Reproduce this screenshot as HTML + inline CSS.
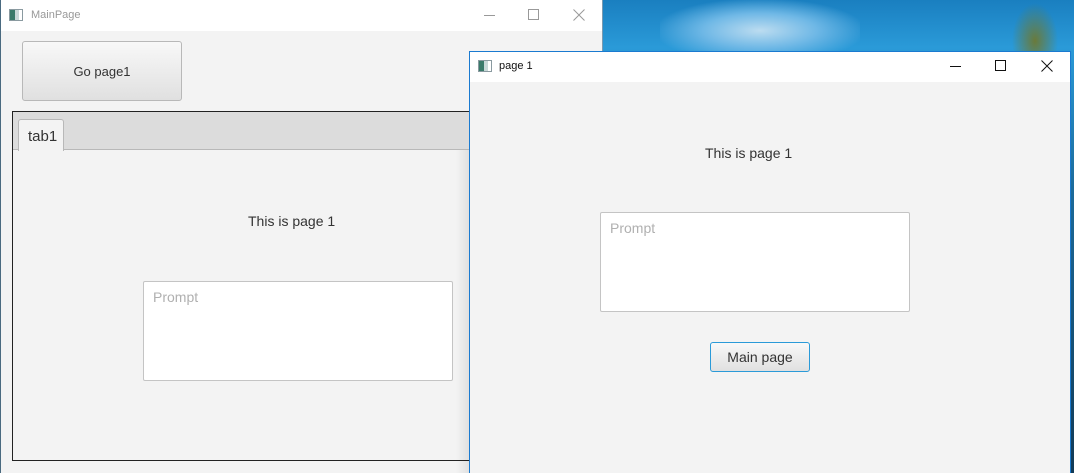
<!DOCTYPE html>
<html><head><style>
html,body{margin:0;width:1074px;height:473px;overflow:hidden}
body{position:relative;font-family:"Liberation Sans",sans-serif;background:linear-gradient(180deg,#1a7fc0 0%,#2a9ad8 10%,#1c6a9a 40%,#123a55 100%);}
.abs{position:absolute;box-sizing:border-box}
.cloud{position:absolute;left:660px;top:0;width:200px;height:51px;background:radial-gradient(ellipse at 50% 60%,#bcdcf0 0%,#6fb8e6 40%,rgba(40,150,220,0) 75%);}
.tree{position:absolute;left:1010px;top:0;width:50px;height:51px;background:radial-gradient(ellipse at 50% 80%,#6a7a3a 0%,rgba(30,120,190,0) 65%);}
.icon{position:absolute;width:14px;height:12px;border:1px solid #8a9aa0;background:linear-gradient(90deg,#3a7a6a 0 5px,#c8d8d8 5px 9px,#fff 9px);box-sizing:border-box}
.title{position:absolute;font-size:11px;}
.btn{border:1px solid #b8b8b8;border-radius:3px;background:linear-gradient(#f8f8f8,#e0e0e0);font-size:13px;color:#333;display:flex;align-items:center;justify-content:center}
.ta{background:#fff;border:1px solid #c4c4c4;border-radius:2px;color:#b0b0b0;font-size:14px;padding:7px 9px}
svg{position:absolute}
</style></head><body>
<div class="cloud"></div><div class="tree"></div>
<!-- main window -->
<div class="abs" style="left:0;top:0;width:603px;height:473px;background:#f3f3f3;border-left:1px solid #4a6a80;border-right:1px solid #7a9ab0"></div>
<div class="abs" style="left:1px;top:0;width:601px;height:31px;background:#fff"></div>
<div class="icon" style="left:9px;top:9px"></div>
<div class="title" style="left:31px;top:9px;color:#999">MainPage</div>
<div class="abs" style="left:484px;top:15px;width:11px;height:1px;background:#999"></div>
<div class="abs" style="left:528px;top:9px;width:11px;height:11px;border:1px solid #999"></div>
<svg style="left:573px;top:9px" width="12" height="12"><path d="M0.5 0.5L11.5 11.5M11.5 0.5L0.5 11.5" stroke="#999" stroke-width="1"/></svg>
<div class="abs btn" style="left:22px;top:41px;width:160px;height:60px">Go page1</div>
<div class="abs" style="left:12px;top:111px;width:470px;height:350px;border:1px solid #222;border-right:none;background:#f3f3f3"></div>
<div class="abs" style="left:13px;top:112px;width:460px;height:38px;background:#dcdcdc;border-bottom:1px solid #b8b8b8"></div>
<div class="abs" style="left:18px;top:119px;width:46px;height:32px;background:#f3f3f3;border:1px solid #b8b8b8;border-bottom:none;border-radius:3px 3px 0 0;font-size:15px;color:#333;padding:8px 0 0 9px">tab1</div>
<div class="abs" style="left:248px;top:213px;font-size:14px;color:#333">This is page 1</div>
<div class="abs ta" style="left:143px;top:281px;width:310px;height:100px">Prompt</div>
<div class="abs" style="left:456px;top:150px;width:13px;height:323px;background:linear-gradient(90deg,rgba(0,0,0,0),rgba(0,0,0,0.08))"></div>
<!-- page1 window -->
<div class="abs" style="left:469px;top:51px;width:602px;height:422px;background:#f3f3f3;border:1px solid #1a7ad0;border-bottom:none"></div>
<div class="abs" style="left:470px;top:52px;width:600px;height:30px;background:#fff"></div>
<div class="icon" style="left:478px;top:60px"></div>
<div class="title" style="left:499px;top:60px;color:#111">page 1</div>
<div class="abs" style="left:950px;top:66px;width:11px;height:1px;background:#111"></div>
<div class="abs" style="left:995px;top:60px;width:11px;height:11px;border:1px solid #111"></div>
<svg style="left:1041px;top:60px" width="12" height="12"><path d="M0.5 0.5L11.5 11.5M11.5 0.5L0.5 11.5" stroke="#111" stroke-width="1"/></svg>
<div class="abs" style="left:705px;top:145px;font-size:14px;color:#333">This is page 1</div>
<div class="abs ta" style="left:600px;top:212px;width:310px;height:100px">Prompt</div>
<div class="abs btn" style="left:710px;top:342px;width:100px;height:30px;border:1px solid #2a9ad8;font-size:14px">Main page</div>
</body></html>
